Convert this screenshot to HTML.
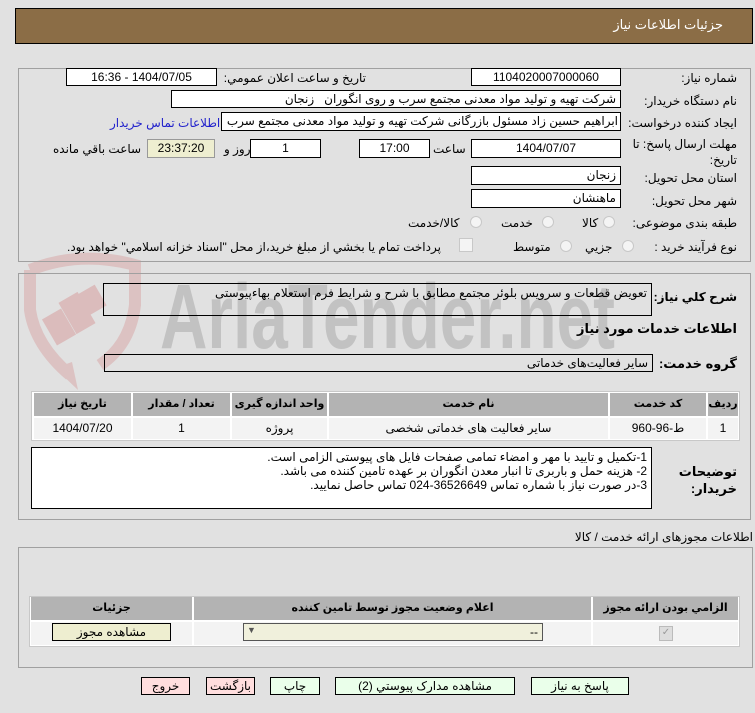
<!DOCTYPE html>
<html><head><meta charset="utf-8"><style>
body{margin:0;width:755px;height:713px;background:#e1e1e1;font-family:"Liberation Sans","DejaVu Sans",sans-serif;font-size:12px;color:#000;position:relative;overflow:hidden}
.a{position:absolute}
.box{position:absolute;background:#fff;border:1px solid #000;box-sizing:border-box;direction:rtl;padding:0 4px;line-height:16px;font-size:12px;white-space:nowrap;overflow:hidden}
.c{text-align:center}
.l{position:absolute;direction:rtl;text-align:right;white-space:nowrap;font-size:12px}
.panel{position:absolute;border:1px solid #a0a0a0;box-sizing:border-box}
.th{position:absolute;background:#b3b3b3;font-weight:bold;text-align:center;line-height:23px;font-size:11px}
.td{position:absolute;background:#f3f3f3;text-align:center;line-height:21px}
.btn{position:absolute;border:1px solid #000;box-sizing:border-box;text-align:center;line-height:16px;background:#eaffea}
.rad{position:absolute;width:12px;height:12px;border-radius:50%;border:1px solid #c8c8c8;background:#f4f4f4;box-sizing:border-box}
</style></head><body>
<!-- watermark -->
<svg class="a" style="left:0;top:250px" width="660" height="150">
<path d="M30 20 Q80 0 135 15 L135 55 Q130 95 100 115" fill="none" stroke="#dcc2c2" stroke-width="12"/>
<path d="M30 20 L30 60 Q35 95 70 125" fill="none" stroke="#dcc2c2" stroke-width="12"/>
<polygon points="55,118 78,140 72,112" fill="#dcc2c2"/>
<g fill="#dbbcbc"><rect x="48" y="62" width="22" height="30" transform="rotate(-30 59 77)"/><rect x="66" y="45" width="22" height="36" transform="rotate(-30 77 63)"/><rect x="82" y="38" width="20" height="24" transform="rotate(-30 92 50)"/></g>
<text x="160" y="98" font-family="Liberation Sans Narrow,Liberation Sans,sans-serif" font-weight="bold" font-size="92" fill="#c2c2c2" textLength="455" lengthAdjust="spacingAndGlyphs">AriaTender.net</text>
</svg>

<div class="a" style="left:15px;top:8px;width:738px;height:36px;background:#8b6d46;border:1px solid #000;box-sizing:border-box"></div>
<div class="l" style="right:32px;top:17px;color:#fff;font-size:13px">جزئیات اطلاعات نیاز</div>

<div class="panel" style="left:18px;top:68px;width:733px;height:194px"></div>
<div class="l" style="right:18px;top:71px">شماره نياز:</div>
<div class="box c" style="left:471px;top:68px;width:150px;height:18px">1104020007000060</div>
<div class="l" style="right:389px;top:71px">تاريخ و ساعت اعلان عمومي:</div>
<div class="box c" style="left:66px;top:68px;width:151px;height:18px">1404/07/05 - 16:36</div>

<div class="l" style="right:18px;top:94px">نام دستگاه خريدار:</div>
<div class="box" style="left:171px;top:90px;width:450px;height:18px">شرکت تهیه و تولید مواد معدنی مجتمع سرب و روی انگوران&nbsp;&nbsp; زنجان</div>

<div class="l" style="right:18px;top:116px">ايجاد کننده درخواست:</div>
<div class="box" style="left:221px;top:112px;width:400px;height:19px;padding:0 2px">ابراهیم حسین زاد مسئول بازرگانی شرکت تهیه و تولید مواد معدنی مجتمع سرب</div>
<div class="l" style="left:110px;top:116px;color:#2222cc">اطلاعات تماس خريدار</div>

<div class="l" style="right:18px;top:136px;line-height:16px">مهلت ارسال پاسخ: تا<br>تاريخ:</div>
<div class="box c" style="left:471px;top:139px;width:150px;height:19px">1404/07/07</div>
<div class="l" style="left:433px;top:142px">ساعت</div>
<div class="box c" style="left:359px;top:139px;width:71px;height:19px">17:00</div>
<div class="box c" style="left:250px;top:139px;width:71px;height:19px">1</div>
<div class="l" style="left:224px;top:142px">روز و</div>
<div class="box c" style="left:147px;top:139px;width:68px;height:19px;background:#eeeed0;border-color:#999">23:37:20</div>
<div class="l" style="left:53px;top:142px">ساعت باقي مانده</div>

<div class="l" style="right:18px;top:171px">استان محل تحويل:</div>
<div class="box" style="left:471px;top:166px;width:150px;height:19px">زنجان</div>
<div class="l" style="right:18px;top:194px">شهر محل تحويل:</div>
<div class="box" style="left:471px;top:189px;width:150px;height:19px">ماهنشان</div>

<div class="l" style="right:18px;top:216px">طبقه بندی موضوعی:</div>
<div class="rad" style="left:603px;top:216px"></div><div class="l" style="left:582px;top:216px">کالا</div>
<div class="rad" style="left:542px;top:216px"></div><div class="l" style="left:501px;top:216px">خدمت</div>
<div class="rad" style="left:470px;top:216px"></div><div class="l" style="left:408px;top:216px">کالا/خدمت</div>

<div class="l" style="right:18px;top:240px">نوع فرآيند خريد :</div>
<div class="rad" style="left:622px;top:240px"></div><div class="l" style="left:585px;top:240px">جزيي</div>
<div class="rad" style="left:560px;top:240px"></div><div class="l" style="left:513px;top:240px">متوسط</div>
<div class="a" style="left:459px;top:238px;width:12px;height:12px;border:1px solid #c8c8c8;background:#f4f4f4"></div>
<div class="l" style="left:67px;top:240px">پرداخت تمام يا بخشي از مبلغ خريد،از محل "اسناد خزانه اسلامي" خواهد بود.</div>

<div class="panel" style="left:18px;top:273px;width:733px;height:247px"></div>
<div class="l" style="right:18px;top:290px;font-weight:bold;font-size:12px">شرح کلي نياز:</div>
<div class="box" style="left:103px;top:283px;width:549px;height:33px;background:transparent;line-height:18px">تعویض قطعات و سرویس بلوئر مجتمع مطابق با شرح و شرایط فرم استعلام بهاءپیوستی</div>
<div class="l" style="right:18px;top:321px;font-weight:bold;font-size:13px">اطلاعات خدمات مورد نياز</div>
<div class="l" style="right:18px;top:356px;font-weight:bold;font-size:13px">گروه خدمت:</div>
<div class="box" style="left:104px;top:354px;width:549px;height:18px;background:transparent">ساير فعاليت‌هاى خدماتى</div>

<div class="a" style="left:31px;top:391px;width:709px;height:50px;background:#fff;border:1px solid #c8c8c8;box-sizing:border-box"></div>
<div class="th" style="left:708px;top:393px;width:30px">رديف</div>
<div class="th" style="left:610px;top:393px;width:96px">کد خدمت</div>
<div class="th" style="left:329px;top:393px;width:279px">نام خدمت</div>
<div class="th" style="left:232px;top:393px;width:95px">واحد اندازه گيری</div>
<div class="th" style="left:133px;top:393px;width:97px">تعداد / مقدار</div>
<div class="th" style="left:34px;top:393px;width:97px">تاريخ نياز</div>
<div class="td" style="left:708px;top:418px;width:30px">1</div>
<div class="td" style="left:610px;top:418px;width:96px">ط-96-960</div>
<div class="td" style="left:329px;top:418px;width:279px">ساير فعاليت هاى خدماتى شخصى</div>
<div class="td" style="left:232px;top:418px;width:95px">پروژه</div>
<div class="td" style="left:133px;top:418px;width:97px">1</div>
<div class="td" style="left:34px;top:418px;width:97px">1404/07/20</div>

<div class="l" style="right:18px;top:463px;font-weight:bold;font-size:13px;line-height:17px">توضيحات<br>خريدار:</div>
<div class="box" style="left:31px;top:447px;width:621px;height:62px;line-height:14px;padding-top:2px">1-تکمیل و تایید با مهر و امضاء تمامی صفحات فایل های پیوستی الزامی است.<br>2- هزینه حمل و باربری تا انبار معدن انگوران بر عهده تامین کننده می باشد.<br>3-در صورت نیاز با شماره تماس 36526649-024 تماس حاصل نمایید.</div>

<div class="l" style="right:2px;top:530px">اطلاعات مجوزهای ارائه خدمت / کالا</div>
<div class="panel" style="left:18px;top:547px;width:735px;height:121px"></div>
<div class="a" style="left:29px;top:596px;width:711px;height:51px;background:#fff;border:1px solid #c8c8c8;box-sizing:border-box"></div>
<div class="th" style="left:593px;top:597px;width:145px">الزامي بودن ارائه مجوز</div>
<div class="th" style="left:194px;top:597px;width:397px">اعلام وضعيت مجوز توسط تامين کننده</div>
<div class="th" style="left:31px;top:597px;width:161px">جزئيات</div>
<div class="td" style="left:593px;top:622px;width:145px;height:23px"></div>
<div class="td" style="left:194px;top:622px;width:397px;height:23px"></div>
<div class="td" style="left:31px;top:622px;width:161px;height:23px"></div>
<div class="a" style="left:659px;top:626px;width:12px;height:13px;background:#ddd;border:1px solid #bbb;color:#999;font-size:10px;line-height:12px;text-align:center">✓</div>
<div class="a" style="left:243px;top:623px;width:300px;height:18px;background:#f0f0dc;border:1px solid #555;box-sizing:border-box"><span class="a" style="left:3px;top:1px;font-size:9px;color:#555">▼</span><span class="a" style="right:4px;top:1px">--</span></div>
<div class="btn" style="left:52px;top:623px;width:119px;height:18px;background:#eeeed0">مشاهده مجوز</div>

<div class="btn" style="left:531px;top:677px;width:98px;height:18px">پاسخ به نياز</div>
<div class="btn" style="left:335px;top:677px;width:180px;height:18px">مشاهده مدارک پيوستي (2)</div>
<div class="btn" style="left:270px;top:677px;width:50px;height:18px">چاپ</div>
<div class="btn" style="left:206px;top:677px;width:49px;height:18px;background:#ffdede">بازگشت</div>
<div class="btn" style="left:141px;top:677px;width:49px;height:18px;background:#ffdede">خروج</div>
</body></html>
